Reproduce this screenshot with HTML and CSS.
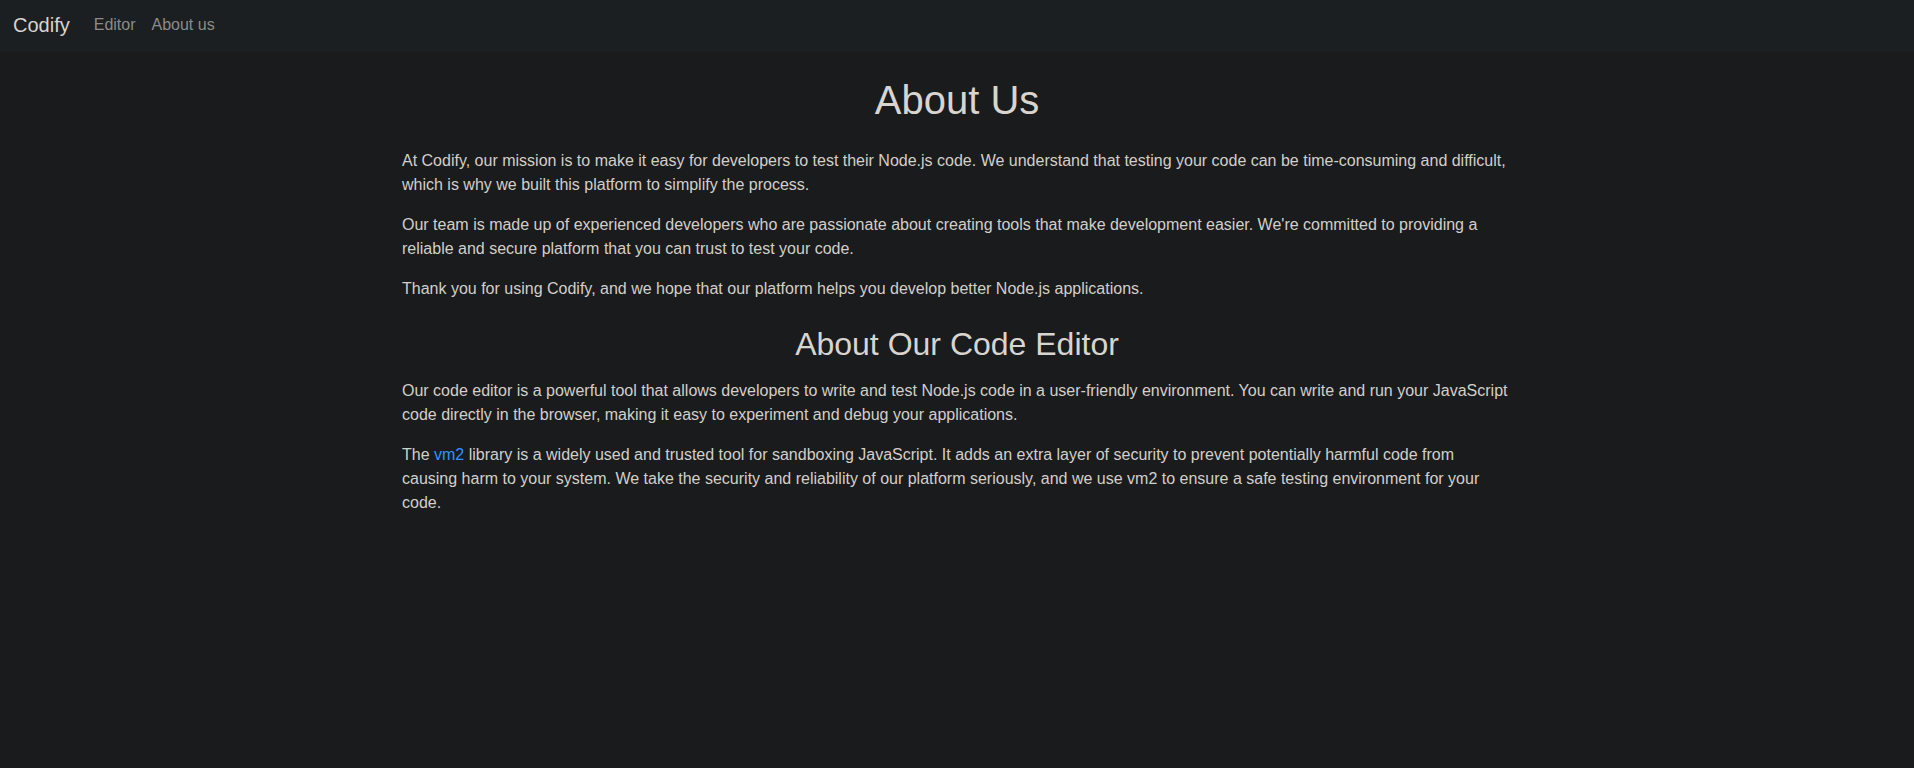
FILE: index.html
```html
<!DOCTYPE html>
<html lang="en">
<head>
<meta charset="utf-8">
<title>Codify - About us</title>
<link rel="stylesheet" href="styles.css">
</head>
<body>
<nav class="navbar">
  <a class="brand" href="#">Codify</a>
  <ul class="nav">
    <li><a class="nav-link" href="#">Editor</a></li>
    <li><a class="nav-link" href="#">About us</a></li>
  </ul>
</nav>
<main class="container">
  <h1 class="title">About Us</h1>
  <p>At Codify, our mission is to make it easy for developers to test their Node.js code. We understand that testing your code can be time-consuming and difficult, which is why we built this platform to simplify the process.</p>
  <p>Our team is made up of experienced developers who are passionate about creating tools that make development easier. We're committed to providing a reliable and secure platform that you can trust to test your code.</p>
  <p>Thank you for using Codify, and we hope that our platform helps you develop better Node.js applications.</p>
  <h2 class="subtitle">About Our Code Editor</h2>
  <p>Our code editor is a powerful tool that allows developers to write and test Node.js code in a user-friendly environment. You can write and run your JavaScript code directly in the browser, making it easy to experiment and debug your applications.</p>
  <p>The <a class="link" href="#">vm2</a> library is a widely used and trusted tool for sandboxing JavaScript. It adds an extra layer of security to prevent potentially harmful code from causing harm to your system. We take the security and reliability of our platform seriously, and we use vm2 to ensure a safe testing environment for your code.</p>
</main>
</body>
</html>
```
FILE: styles.css
```css
* { box-sizing: border-box; }
html, body { margin: 0; padding: 0; }
body {
  background: #1a1b1d;
  color: #d3cfc9;
  font-family: "Liberation Sans", Arial, sans-serif;
  font-size: 16px;
  line-height: 24px;
  min-height: 768px;
}
.navbar {
  display: flex;
  align-items: center;
  height: 52px;
  padding: 0 12px 3px 13px;
  background: #1c1f21;
}
.brand {
  font-size: 20px;
  line-height: 30px;
  color: #d8d4cf;
  text-decoration: none;
  margin-right: 16px;
}
.nav {
  display: flex;
  list-style: none;
  margin: 0;
  padding: 0;
}
.nav-link {
  display: block;
  padding: 0 8px;
  color: #8b8b8b;
  text-decoration: none;
  line-height: 24px;
}
.container {
  width: 1110px;
  margin: 0 auto;
}
h1, h2 { font-weight: 400; text-align: center; color: #d8d4cf; }
.title {
  font-size: 40px;
  line-height: 48px;
  margin: 24px 0 25px;
}
.subtitle {
  font-size: 32px;
  line-height: 38px;
  margin: 24px 0 16px;
}
p { margin: 0 0 16px; }
.link { color: #3391ff; text-decoration: none; }
```
